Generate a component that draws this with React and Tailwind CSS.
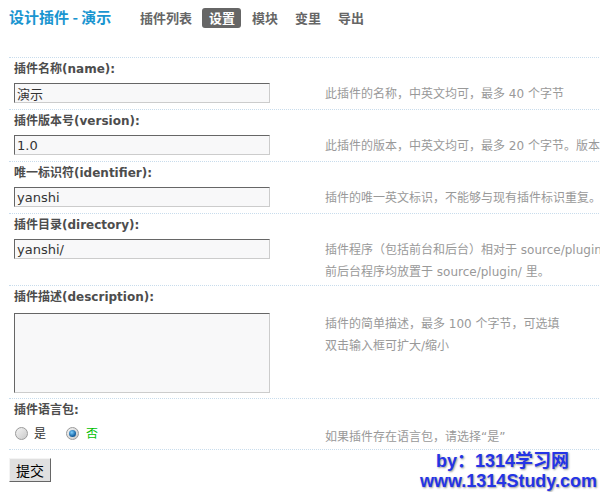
import { useState } from "react";

// 插件设置表单
const fields = [
  { cn: "插件名称", en: "(name):", value: "演示", help: ["此插件的名称，中英文均可，最多 40 个字节"] },
  { cn: "插件版本号", en: "(version):", value: "1.0", help: ["此插件的版本，中英文均可，最多 20 个字节。版本号高的插件可以覆盖低版本"] },
  { cn: "唯一标识符", en: "(identifier):", value: "yanshi", help: ["插件的唯一英文标识，不能够与现有插件标识重复。"] },
  {
    cn: "插件目录",
    en: "(directory):",
    value: "yanshi/",
    help: ["插件程序（包括前台和后台）相对于 source/plugin/ 的目录名称，如为空则", "前后台程序均放置于 source/plugin/ 里。"],
  },
];

const navItems = ["插件列表", "设置", "模块", "变里", "导出"];

function Label({ cn, en, tall }) {
  return (
    <div
      className={`border-t border-dotted border-[#c8dcec] pl-[5px] pt-[1px] leading-[20px] font-bold text-[#4d4d4d] ${tall ? "pb-[6px]" : "pb-[4px]"}`}
    >
      {cn}
      {en}
    </div>
  );
}

function Help({ lines }) {
  return (
    <div className="whitespace-nowrap pb-[2px] leading-[22px] text-[#999]">
      {lines.map((l) => (
        <div key={l}>{l}</div>
      ))}
    </div>
  );
}

function Radio({ checked }) {
  return (
    <span className="flex h-[13px] w-[13px] items-center justify-center rounded-full border border-[#9a9a9a] bg-[linear-gradient(135deg,#f4f4f4,#c9c9c9)]">
      {checked && (
        <span className="h-[7px] w-[7px] rounded-full bg-[radial-gradient(circle_at_40%_35%,#7fd0ff,#1867a8_60%,#0b3a66)]" />
      )}
    </span>
  );
}

export default function App() {
  const [lang, setLang] = useState(false);

  return (
    <div className="relative h-[492px] w-[600px] overflow-hidden bg-white text-[12px] [font-family:'DejaVu_Sans','Noto_Sans_CJK_SC',sans-serif]">
      {/* 标题 + 导航 */}
      <div className="flex h-[35px] items-center pl-[9px]">
        <h2 className="text-[15px] font-bold text-[#1a95d0] [font-family:'Noto_Sans_CJK_SC',sans-serif]">设计插件 - 演示</h2>
        <ul className="ml-[22px] flex gap-[4px] text-[13px] font-bold [font-family:'Noto_Sans_CJK_SC',sans-serif]">
          {navItems.map((n) => (
            <li
              key={n}
              className={`h-[20px] rounded-[3px] px-[6.5px] leading-[20px] ${n === "设置" ? "bg-[#666] text-white" : "text-[#666]"}`}
            >
              {n}
            </li>
          ))}
        </ul>
      </div>

      <form className="ml-[9px] mt-[22px] w-[900px]" onSubmit={(e) => e.preventDefault()}>
        {fields.map((f) => (
          <div key={f.cn}>
            <Label cn={f.cn} en={f.en} />
            <div className="flex">
              <div className="w-[316px] shrink-0 pb-[6px] pl-[5px]">
                <input
                  readOnly
                  value={f.value}
                  className="block h-[20px] w-[256px] border border-t-[#666] border-l-[#666] border-r-[#ccc] border-b-[#ccc] bg-[#f8f8f9] pl-[2px] text-[13px] text-[#333] outline-none"
                />
              </div>
              <Help lines={f.help} />
            </div>
          </div>
        ))}

        <Label cn="插件描述" en="(description):" tall />
        <div className="flex">
          <div className="w-[316px] shrink-0 pb-[5px] pl-[5px]">
            <textarea
              readOnly
              className="block h-[80px] w-[256px] resize-none border border-t-[#666] border-l-[#666] border-r-[#ccc] border-b-[#ccc] bg-[#f8f8f9] outline-none"
            />
          </div>
          <Help lines={["插件的简单描述，最多 100 个字节，可选填", "双击输入框可扩大/缩小"]} />
        </div>

        <Label cn="插件语言包" en=":" />
        <div className="flex border-b border-dotted border-[#c8dcec]">
          <div className="flex h-[18px] w-[316px] shrink-0 items-center pl-[6px] [font-family:'Noto_Sans_CJK_SC',sans-serif]">
            <label className="flex items-center" onClick={() => setLang(true)}>
              <Radio checked={lang} />
              <span className={`ml-[6px] ${lang ? "text-[#00c000]" : "text-[#333]"}`}>是</span>
            </label>
            <label className="ml-[20px] flex items-center" onClick={() => setLang(false)}>
              <Radio checked={!lang} />
              <span className={`ml-[7px] ${!lang ? "text-[#00c000]" : "text-[#333]"}`}>否</span>
            </label>
          </div>
          <div className="whitespace-nowrap pb-[1px] pt-[2px] leading-[22px] text-[#999]">如果插件存在语言包，请选择“是”</div>
        </div>

        <button
          type="submit"
          className="mt-[8px] h-[24px] w-[42px] border border-t-[#f4f4f4] border-l-[#f4f4f4] border-r-[#666] border-b-[#666] bg-[#e0e0e0] text-[14px] text-black [font-family:'Noto_Sans_CJK_SC',sans-serif]"
        >
          提交
        </button>
      </form>

      {/* 水印 */}
      <div className="absolute left-[420px] top-[451px] whitespace-nowrap text-[18px] font-bold leading-[20px] text-[#2434e6] [font-family:'Liberation_Sans','Noto_Sans_CJK_SC',sans-serif] [text-shadow:1px_1px_2px_#999]">
        <div className="pl-[16px]">by：1314学习网</div>
        <div>www.1314Study.com</div>
      </div>
    </div>
  );
}
